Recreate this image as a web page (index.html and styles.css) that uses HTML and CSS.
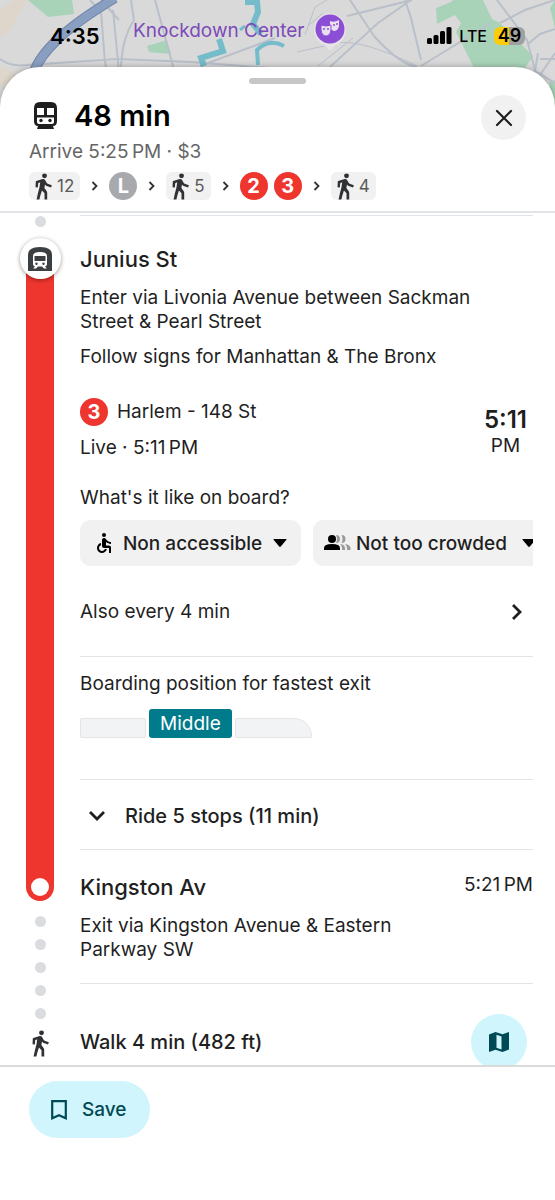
FILE: index.html
```
<!DOCTYPE html>
<html lang="en">
<head>
    <meta charset="UTF-8">
    <meta name="viewport" content="width=device-width, initial-scale=1.0">
    <title>48 min - Transit directions</title>
    <link rel="stylesheet" href="styles.css">
</head>
<body>
    <!-- Shared icons -->
    <svg class="icon-defs" aria-hidden="true">
        <symbol id="walk" viewBox="0 0 24 24">
            <circle cx="13.300" cy="3.300" r="2.100"/>
            <path d="M11.700 6q1.400-.3 2.200 1l1.200 2.300q.3.500.9.700l3.600 1.300-.7 1.900-4.300-1.500-.9-1-.5 3 2 2.800q.4.600.4 1.300V23.500h-2.300v-5.300l-2.200-2.400-1.300 4.200-.9 3.500H6.500l1.100-5 1.400-5.500.6-4.200-1.700.9-.3 3.600-2-.2.200-4.700q0-.4.400-.6z"/>
        </symbol>
        <symbol id="next" viewBox="0 0 9 10">
            <path d="M2.500 1l4 4-4 4" fill="none" stroke="#333" stroke-width="1.800"/>
        </symbol>
        <symbol id="caret" viewBox="0 0 14 8">
            <path d="M1 0h12q1 0 .4.800L7.800 7.500q-.8.800-1.600 0L.6.800Q0 0 1 0z"/>
        </symbol>
    </svg>

    <div class="map">
        <svg class="map-art" viewBox="0 0 555 110" preserveAspectRatio="xMidYMin slice" aria-hidden="true">
            <rect width="555" height="110" fill="#d9d9da"/>
            <g fill="#ded6cb">
                <path d="M0 10l14-10h14L8 32 0 37z"/>
                <path d="M0 66l14 6 4 14H0z"/>
            </g>
            <g fill="#a9d3b8">
                <path d="M28 0h44l2 14-26 3z"/>
                <path d="M147 46l20-6 4 14-22-2z"/>
                <path d="M436 8l15-6 2-2h30l9 19 8 4 33 33-8 12h-51l-18-36 5-9-6-8-18 9z"/>
                <path d="M550 8l5-8v28zM549 82l6-2v30z"/>
            </g>
            <g fill="none" stroke="#b9c0c9" stroke-width="2">
                <path d="M0 59q12 8 26 6l91-6 75 3 78 6M90 0l11 12 4 50 2 10M113 10l6 62M131 0l3 20q-13 20-13 52M101 0l18 20M155 0l19 70M200 66l75-28"/>
                <path d="M350 0l24 36q25 28 43 31M347 16l65-16M405 0l6 18 10 42M330 67l48-44 33-23M421 66l70-43M500 23l25-13 30-10M497 0l30 40 8 30M528 44l12-10 15-5M538 53l-3 18 20 12M540 59h15M540 75l15-22"/>
                <path d="M297 52l40-9q25-4 80 23M318 66l35-28M305 35l10-28 12-7M309 25l14-12" stroke-width="1"/>
            </g>
            <g fill="none" stroke="#75bccb" stroke-width="6">
                <path d="M245 2h12l1 10-5 12 8 10M219 39l4 12-22 7 3 8"/>
                <path d="M284 46q-15-8-27 4l1 15" stroke-width="4"/>
                <path d="M240 30l5-4" stroke-width="3"/>
            </g>
            <path d="M115-2Q77 21 58 39T34 72" fill="none" stroke="#6f84a8" stroke-width="10"/>
            <path d="M115-2Q77 21 58 39T34 72" fill="none" stroke="#899fc1" stroke-width="8"/>
        </svg>
        <div class="place">
            <span>Knockdown Center</span>
            <svg width="36" height="40" viewBox="0 0 36 40" aria-hidden="true">
                <path d="M18 1a17 17 0 0 1 10 30q-5 2-8 6-2 2-4 0-3-4-8-6A17 17 0 0 1 18 1z" fill="#e6e2e8"/>
                <circle cx="18" cy="17" r="14.500" fill="#8d4ed6"/>
                <path d="M18 9q4 2 9-1v6q-1 5-5 5-4-1-4-5z" fill="#e9e1f0"/>
                <path d="M9 13q5 2 10 0v5q-1 6-5 6t-5-6z" fill="#e9e1f0" stroke="#8d4ed6" stroke-width="1"/>
                <g fill="#8d4ed6"><circle cx="12" cy="17" r="1"/><circle cx="16" cy="17" r="1"/><circle cx="22" cy="13" r="1"/><circle cx="25" cy="12" r="1"/></g>
            </svg>
        </div>
        <div class="status">
            <span class="clock">4:35</span>
            <span class="signal">
                <svg width="25" height="17" viewBox="0 0 25 17" aria-hidden="true">
                    <rect x="0" y="11" width="5" height="6" rx="1.500"/>
                    <rect x="6.500" y="8" width="5" height="9" rx="1.500"/>
                    <rect x="13" y="4" width="5" height="13" rx="1.500"/>
                    <rect x="19.500" y="0" width="5" height="17" rx="1.500"/>
                </svg>
                <span class="network">LTE</span>
                <span class="battery">49</span>
            </span>
        </div>
    </div>

    <main class="sheet">
        <header class="summary">
            <div class="grabber"></div>
            <div class="title-row">
                <svg width="23" height="28" viewBox="0 0 23 28" aria-hidden="true">
                    <path d="M6 0h11q6 0 6 6v13q0 5-4 5l1 3H3l1-3q-4 0-4-5V6q0-6 6-6z" fill="#1f1f1f"/>
                    <path d="M3 6h7v7H3zM13 6h7v7h-7zM3 15.500h17V20q0 2-2 2H5q-2 0-2-2z" fill="#fff"/>
                    <circle cx="7" cy="18.500" r="1.700" fill="#1f1f1f"/>
                    <circle cx="16" cy="18.500" r="1.700" fill="#1f1f1f"/>
                </svg>
                <h1>48 min</h1>
                <button class="close" type="button" aria-label="Close">
                    <svg width="18" height="18" viewBox="0 0 18 18" aria-hidden="true">
                        <path d="M2 2l14 14M16 2L2 16" stroke="#1f1f1f" stroke-width="2.200" stroke-linecap="round"/>
                    </svg>
                </button>
            </div>
            <p class="arrive">Arrive 5:25&#8201;PM · $3</p>
            <div class="route">
                <span class="walk-chip"><svg class="walk-icon"><use href="#walk"/></svg>12</span>
                <svg class="next"><use href="#next"/></svg>
                <span class="line grey">L</span>
                <svg class="next"><use href="#next"/></svg>
                <span class="walk-chip"><svg class="walk-icon"><use href="#walk"/></svg>5</span>
                <svg class="next"><use href="#next"/></svg>
                <span class="lines"><span class="line">2</span><span class="line">3</span></span>
                <svg class="next"><use href="#next"/></svg>
                <span class="walk-chip"><svg class="walk-icon"><use href="#walk"/></svg>4</span>
            </div>
        </header>

        <div class="steps">
            <section class="step before">
                <div class="rail"><i class="dot"></i></div>
                <div class="details"></div>
            </section>

            <section class="step ride">
                <div class="rail">
                    <div class="stop-icon">
                        <svg width="24" height="24" viewBox="0 0 24 24" aria-hidden="true">
                            <path d="M0 24V8q0-8 12-8t12 8v16z" fill="#3c4043"/>
                            <path d="M5 9q0-4 7-4t7 4v8q0 2-2 2.500l1.500 1.500v.5H16L14 19.500h-4L8 21.500H5.500V21L7 19.500Q5 19 5 17z" fill="#fff"/>
                            <path d="M6.500 9h11v5h-11z" fill="#3c4043"/>
                            <circle cx="8.500" cy="16.700" r="1.200" fill="#3c4043"/>
                            <circle cx="15.500" cy="16.700" r="1.200" fill="#3c4043"/>
                        </svg>
                    </div>
                    <div class="track"></div>
                </div>
                <div class="details">
                    <h2 class="station">Junius St</h2>
                    <p class="enter">Enter via Livonia Avenue between Sackman Street &amp; Pearl Street</p>
                    <p class="follow">Follow signs for Manhattan &amp; The Bronx</p>

                    <div class="departure">
                        <div>
                            <p class="headsign"><span class="line">3</span>Harlem - 148 St</p>
                            <p class="live">Live · 5:11&#8201;PM</p>
                        </div>
                        <div class="time"><strong>5:11</strong><span>PM</span></div>
                    </div>

                    <p class="question">What's it like on board?</p>
                    <div class="chips">
                        <label class="chip">
                            <svg width="24" height="24" viewBox="0 0 24 24" aria-hidden="true">
                                <circle cx="12" cy="4" r="2"/>
                                <path d="M19 13v-2c-1.540.02-3.090-.75-4.070-1.830l-1.290-1.430c-.17-.19-.38-.34-.61-.45H13c-.35-.2-.75-.3-1.190-.26C10.760 7.110 10 8.040 10 9.090V15c0 1.100.9 2 2 2h5v5h2v-5.500c0-1.100-.9-2-2-2h-3v-3.450c1.290 1.070 3.250 1.940 5 1.950zm-6.170 5c-.41 1.160-1.520 2-2.830 2-1.660 0-3-1.340-3-3 0-1.310.84-2.410 2-2.830V12.100c-2.280.46-4 2.480-4 4.900 0 2.760 2.240 5 5 5 2.420 0 4.440-1.720 4.900-4h-2.070z"/>
                            </svg>
                            <select aria-label="Accessibility"><option>Non accessible</option></select>
                            <svg class="caret"><use href="#caret"/></svg>
                        </label>
                        <label class="chip crowd">
                            <svg width="27" height="16" viewBox="0 0 27 16" aria-hidden="true">
                                <circle cx="8" cy="4" r="4"/>
                                <path d="M0 15v-2q0-4 8-4t8 4v2z"/>
                                <path d="M12 0q4 0 4 4t-4 4q2-4 0-8zM17.500 0q4 0 4 4t-4 4q2-4 0-8zM16 9q5 .5 5 4v2h-3v-2q0-2-2-4zM21 9q5 .5 5.500 4v2h-3.500v-2q0-2-2-4z" fill="#9a9a9a"/>
                            </svg>
                            <select aria-label="Crowding"><option>Not too crowded</option></select>
                            <svg class="caret"><use href="#caret"/></svg>
                        </label>
                    </div>

                    <a class="also" href="#">Also every 4 min
                        <svg width="12" height="18" viewBox="0 0 12 18" aria-hidden="true">
                            <path d="M2 2l7 7-7 7" fill="none" stroke="#1f1f1f" stroke-width="2.800"/>
                        </svg>
                    </a>

                    <div class="boarding">
                        <p>Boarding position for fastest exit</p>
                        <div class="cars">
                            <span class="car"></span>
                            <span class="car-here">Middle</span>
                            <span class="car front"></span>
                        </div>
                    </div>

                    <button class="stops" type="button">
                        <svg width="18" height="12" viewBox="0 0 18 12" aria-hidden="true">
                            <path d="M2 2l7 7 7-7" fill="none" stroke="#1f1f1f" stroke-width="2.800"/>
                        </svg>
                        Ride 5 stops (11 min)
                    </button>

                    <div class="arrival">
                        <h2 class="station">Kingston Av</h2>
                        <span>5:21&#8201;PM</span>
                    </div>
                </div>
            </section>

            <section class="step walk">
                <div class="rail">
                    <i class="dot"></i>
                    <i class="dot"></i>
                    <i class="dot"></i>
                    <i class="dot"></i>
                    <i class="dot"></i>
                    <svg class="walk-icon"><use href="#walk"/></svg>
                </div>
                <div class="details">
                    <p class="exit">Exit via Kingston Avenue &amp; Eastern Parkway SW</p>
                    <div class="walk-row">
                        <h3>Walk 4 min (482 ft)</h3>
                        <button class="map-button" type="button" aria-label="Show map">
                            <svg width="20" height="20" viewBox="0 0 20 20" aria-hidden="true">
                                <path d="M0 2.500L6.500 0l7 2.300L20 0v17.500L13.500 20l-7-2.300L0 20z" fill="#004a55"/>
                                <path d="M7.500 2.700l5 1.700v13l-5-1.700z" fill="#d0f5fd"/>
                            </svg>
                        </button>
                    </div>
                </div>
            </section>
        </div>

        <footer class="actions">
            <button class="save" type="button">
                <svg width="16" height="20" viewBox="0 0 16 20" aria-hidden="true">
                    <path d="M1.200 1.200h13.600v17L8 15.200l-6.800 3z" fill="none" stroke="#004a55" stroke-width="2.200"/>
                </svg>
                Save
            </button>
        </footer>
    </main>
</body>
</html>
```
FILE: styles.css
```
* {
    box-sizing: border-box;
}
body {
    margin: 0;
    height: 100vh;
    display: flex;
    flex-direction: column;
    position: relative;
    overflow: hidden;
    background: #ffffff;
    color: #1f1f1f;
    font-family: Inter, "Liberation Sans", sans-serif;
    font-size: 19px;
    line-height: 24px;
}
h1, h2, h3, p {
    margin: 0;
    font-weight: 400;
}
button, select {
    margin: 0;
    padding: 0;
    border: 0;
    background: none;
    color: inherit;
    font: inherit;
}
svg {
    flex-shrink: 0;
}
.icon-defs {
    position: absolute;
    width: 0;
    height: 0;
}

/* Map and status bar */
.map {
    height: 67px;
    flex-shrink: 0;
}
.map-art {
    position: absolute;
    top: 0;
    left: 0;
    width: 100%;
    height: 110px;
}
.place {
    position: absolute;
    top: 12px;
    left: 133px;
    display: flex;
    align-items: center;
    gap: 8px;
    color: #7d4bb8;
    white-space: nowrap;
}
.place span {
    margin-bottom: 2px;
}
.status {
    position: relative;
    height: 67px;
    padding: 4px 30px 0 50px;
    display: flex;
    align-items: center;
    justify-content: space-between;
    color: #000000;
}
.clock {
    font-size: 22px;
    font-weight: 600;
}
.signal {
    display: flex;
    align-items: center;
    gap: 7px;
}
.network {
    font-size: 16px;
    font-weight: 500;
}
.battery {
    width: 31px;
    height: 18px;
    border-radius: 6px;
    background: linear-gradient(to right, #fccc0a 50%, #a0a0a0 50%);
    font-size: 18px;
    font-weight: 600;
    line-height: 18px;
    text-align: center;
}

/* Bottom sheet */
.sheet {
    flex: 1;
    min-height: 0;
    display: flex;
    flex-direction: column;
    position: relative;
    background: #ffffff;
    border-radius: 40px 40px 0 0;
    box-shadow: 0 0 6px rgba(0, 0, 0, 0.3);
}
.summary {
    padding: 11px 29px 11px;
    border-bottom: 2px solid #e1e3e6;
}
.grabber {
    width: 57px;
    height: 6px;
    margin: 0 auto 11px;
    border-radius: 3px;
    background: #c6c6c6;
}
.title-row {
    height: 45px;
    padding-left: 5px;
    display: flex;
    align-items: center;
    gap: 17px;
}
.title-row h1 {
    flex: 1;
    margin-bottom: 3px;
    color: #000000;
    font-size: 29px;
    font-weight: 600;
    line-height: 40px;
}
.title-row > svg {
    margin-bottom: 3px;
}
.close {
    width: 45px;
    height: 45px;
    border-radius: 50%;
    background: #f1f1f1;
    display: flex;
    align-items: center;
    justify-content: center;
}
.arrive {
    color: #666666;
}
.route {
    margin-top: 8px;
    display: flex;
    align-items: center;
    gap: 10px;
}
.walk-chip {
    height: 28px;
    padding-right: 6px;
    display: flex;
    align-items: center;
    border-radius: 6px;
    background: #f1f1f1;
    color: #5a5a5a;
    font-size: 17px;
}
.walk-icon {
    width: 28px;
    height: 28px;
    fill: #303134;
}
.next {
    width: 9px;
    height: 10px;
}
.lines {
    display: flex;
    gap: 6px;
}
.line {
    width: 28px;
    height: 28px;
    border-radius: 50%;
    background: #ee352e;
    color: #ffffff;
    font-size: 20px;
    font-weight: 700;
    line-height: 28px;
    text-align: center;
}
.line.grey {
    background: #a7a9ac;
}

/* Step list */
.steps {
    flex: 1;
    min-height: 0;
    overflow: hidden;
}
.step {
    display: grid;
    grid-template-columns: 80px 1fr;
}
.rail {
    display: flex;
    flex-direction: column;
    align-items: center;
}
.details {
    min-width: 0;
    padding-right: 22px;
}
.dot {
    width: 11px;
    height: 11px;
    border-radius: 50%;
    background: #dadce0;
}
.before {
    height: 25px;
}
.before .rail {
    padding-top: 3px;
}
.before .details {
    height: 3px;
    margin-right: 22px;
    border-bottom: 1px solid #e1e3ec;
}
.stop-icon {
    width: 41px;
    height: 41px;
    border-radius: 50%;
    background: #ffffff;
    box-shadow: 0 1px 4px rgba(0, 0, 0, 0.4);
    display: flex;
    align-items: center;
    justify-content: center;
    z-index: 1;
}
.track {
    flex: 1;
    width: 28px;
    margin-top: -20px;
    padding-bottom: 5px;
    border-radius: 0 0 14px 14px;
    background: #ee352e;
    display: flex;
    align-items: flex-end;
    justify-content: center;
}
.track::after {
    content: "";
    width: 18px;
    height: 18px;
    border-radius: 50%;
    background: #ffffff;
}
.station {
    font-size: 22px;
    font-weight: 500;
    line-height: 28px;
}
.ride > .details > .station {
    padding: 7px 0;
}
.enter {
    margin-top: 6px;
    padding-right: 40px;
}
.follow {
    margin-top: 11px;
}
.departure {
    margin-top: 29px;
    display: flex;
    justify-content: space-between;
}
.headsign {
    display: flex;
    align-items: center;
    gap: 9px;
    line-height: 28px;
}
.live {
    margin-top: 10px;
}
.time {
    padding: 8px 6px 0 0;
    display: flex;
    flex-direction: column;
    align-items: center;
}
.time strong {
    font-size: 24px;
    font-weight: 600;
    line-height: 28px;
}
.question {
    margin-top: 26px;
}
.chips {
    margin-top: 10px;
    display: flex;
    gap: 12px;
    overflow: hidden;
}
.chip {
    flex-shrink: 0;
    height: 46px;
    padding: 0 14px 0 12px;
    display: flex;
    align-items: center;
    gap: 7px;
    border-radius: 10px;
    background: #f1f1f1;
    font-weight: 500;
}
.chip.crowd {
    gap: 5px;
    padding-left: 11px;
}
.chip select {
    appearance: none;
    height: 46px;
    padding-top: 1px;
}
.caret {
    width: 14px;
    height: 8px;
    margin-left: 3px;
}
.crowd .caret {
    margin-left: 10px;
}
.also {
    height: 91px;
    padding: 2px 10px 0 0;
    border-bottom: 1px solid #e3e3e3;
    display: flex;
    align-items: center;
    justify-content: space-between;
    color: inherit;
    text-decoration: none;
}
.boarding {
    padding: 15px 0 41px;
    border-bottom: 1px solid #e3e3e3;
}
.cars {
    margin-top: 13px;
    display: flex;
    align-items: flex-end;
    gap: 3px;
}
.car {
    width: 66px;
    height: 20px;
    border: 1px solid #e3e5e8;
    border-radius: 2px;
    background: #f1f3f4;
}
.car.front {
    width: 77px;
    border-radius: 2px 18px 0 2px;
}
.car-here {
    height: 29px;
    padding: 0 11px;
    border-radius: 3px;
    background: #007b8b;
    color: #ffffff;
    line-height: 29px;
}
.stops {
    width: 100%;
    height: 70px;
    padding: 2px 0 0 8px;
    border-bottom: 1px solid #e3e3e3;
    display: flex;
    align-items: center;
    gap: 19px;
    font-size: 20px;
    font-weight: 500;
}
.arrival {
    margin-top: 23px;
    display: flex;
    justify-content: space-between;
}
.walk .rail {
    padding-top: 15px;
    gap: 12px;
}
.walk .walk-icon {
    margin-top: -2px;
}
.exit {
    padding: 13px 80px 21px 0;
    border-bottom: 1px solid #e3e3e3;
}
.walk-row {
    padding: 30px 6px 0 0;
    display: flex;
    align-items: center;
    justify-content: space-between;
}
.walk-row h3 {
    font-size: 20px;
    font-weight: 500;
}
.map-button {
    width: 56px;
    height: 56px;
    border-radius: 50%;
    background: #d0f5fd;
    display: flex;
    align-items: center;
    justify-content: center;
}

/* Bottom bar */
.actions {
    height: 135px;
    padding: 14px 29px;
    border-top: 2px solid #dadada;
    background: #ffffff;
}
.save {
    height: 57px;
    padding: 0 23px 0 22px;
    border-radius: 29px;
    background: #d0f5fd;
    color: #004a55;
    display: flex;
    align-items: center;
    gap: 15px;
    font-weight: 500;
}
```
